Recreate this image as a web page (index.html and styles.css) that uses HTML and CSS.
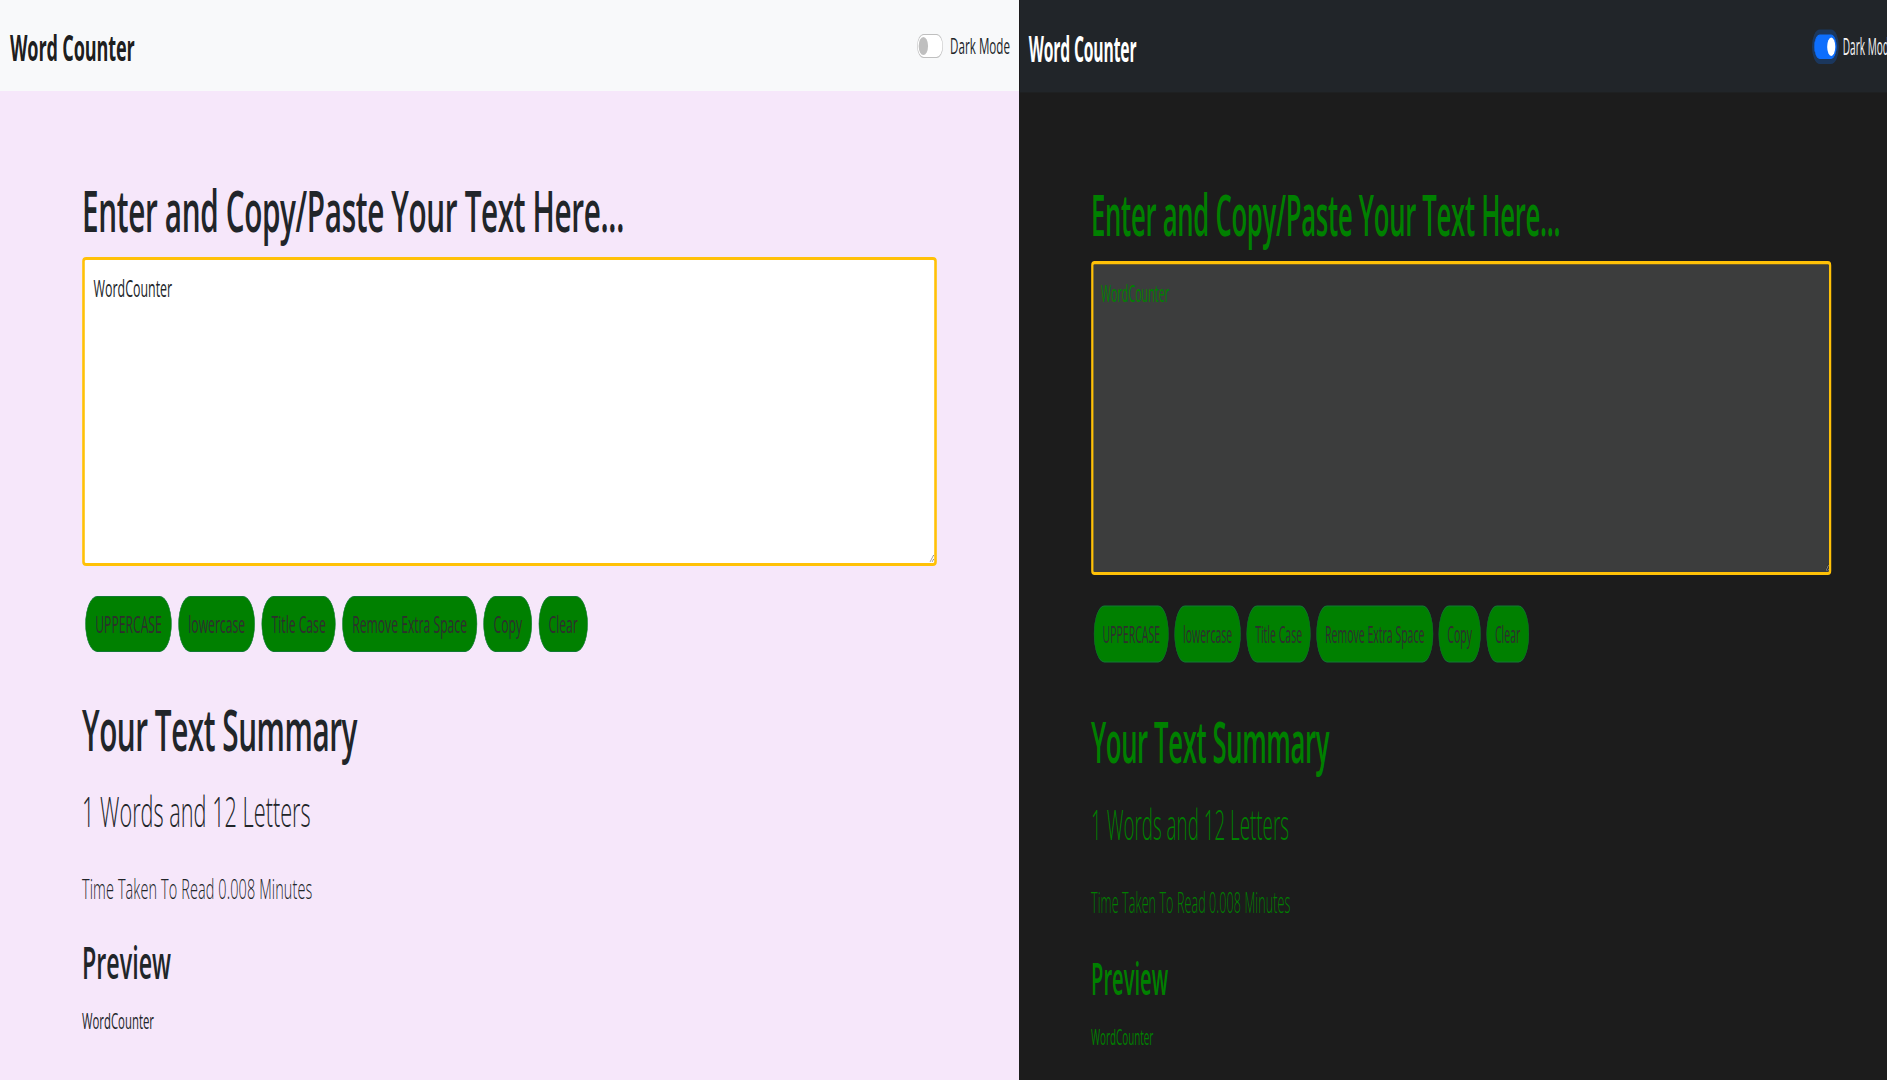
FILE: index.html
```html
<!DOCTYPE html>
<html lang="en">
<head>
<meta charset="utf-8">
<title>Word Counter</title>
<link rel="stylesheet" href="styles.css">
</head>
<body>
<div class="shots">
  <div class="shot shot-light">
    <div class="page theme-light">
      <nav class="navbar">
        <span class="brand">Word Counter</span>
        <label class="switch-wrap"><span class="switch"><span class="knob"></span></span><span class="switch-label">Dark Mode</span></label>
      </nav>
      <main class="container">
        <h1 class="heading">Enter and Copy/Paste Your Text Here...</h1>
        <textarea class="text-box" rows="8">WordCounter</textarea>
        <div class="actions">
          <button class="btn">UPPERCASE</button>
          <button class="btn">lowercase</button>
          <button class="btn">Title Case</button>
          <button class="btn">Remove Extra Space</button>
          <button class="btn">Copy</button>
          <button class="btn">Clear</button>
        </div>
        <h1 class="heading summary-title">Your Text Summary</h1>
        <p class="count">1 Words and 12 Letters</p>
        <p class="time">Time Taken To Read 0.008 Minutes</p>
        <h2 class="preview-title">Preview</h2>
        <p class="preview-text">WordCounter</p>
      </main>
    </div>
  </div>
  <div class="shot shot-dark">
    <div class="page theme-dark">
      <nav class="navbar">
        <span class="brand">Word Counter</span>
        <label class="switch-wrap"><span class="switch"><span class="knob"></span></span><span class="switch-label">Dark Mode</span></label>
      </nav>
      <main class="container">
        <h1 class="heading">Enter and Copy/Paste Your Text Here...</h1>
        <textarea class="text-box" rows="8">WordCounter</textarea>
        <div class="actions">
          <button class="btn">UPPERCASE</button>
          <button class="btn">lowercase</button>
          <button class="btn">Title Case</button>
          <button class="btn">Remove Extra Space</button>
          <button class="btn">Copy</button>
          <button class="btn">Clear</button>
        </div>
        <h1 class="heading summary-title">Your Text Summary</h1>
        <p class="count">1 Words and 12 Letters</p>
        <p class="time">Time Taken To Read 0.008 Minutes</p>
        <h2 class="preview-title">Preview</h2>
        <p class="preview-text">WordCounter</p>
      </main>
    </div>
  </div>
</div>
</body>
</html>
```

FILE: styles.css
```css
html, body {
  margin: 0;
  padding: 0;
  background: #1c1c1c;
  overflow: hidden;
}

.shots {
  display: flex;
  width: 1887px;
  height: 1080px;
}

.shot {
  flex-shrink: 0;
  height: 1080px;
  overflow: hidden;
}

.shot-light { width: 1019px; }
.shot-dark { width: 868px; }

/* the page is laid out normally, then squeezed horizontally like the screenshot */
.page {
  --sx: 0.517;
  width: calc(1019px / var(--sx));
  min-height: 1100px;
  transform-origin: 0 0;
  transform: scaleX(var(--sx));
  font-family: "Open Sans", "Noto Sans", sans-serif;
}

.theme-light {
  background: #f6e7fa;
  color: #212529;
}

.theme-dark {
  background: #1c1c1c;
  color: #008000;
  transform: translateX(1px) scale(0.4477, 1.016);
}

/* navbar */
.navbar {
  box-sizing: border-box;
  height: 91px;
  display: flex;
  align-items: center;
  justify-content: space-between;
  padding: 0 calc(9px / var(--sx)) 0 calc(10px / var(--sx));
}

.theme-light .navbar { background: #f8f9fa; }
.theme-dark .navbar { background: #212529; }

.brand {
  font-size: 35px;
  font-weight: 700;
  line-height: 1;
  margin-top: 3px;
  letter-spacing: -0.3px;
}

.theme-light .brand { color: rgba(0, 0, 0, 0.9); }
.theme-dark .brand { color: #fff; }

.switch-wrap {
  display: flex;
  align-items: center;
}

.switch {
  box-sizing: border-box;
  display: flex;
  align-items: center;
  width: calc(26px / var(--sx));
  height: 24px;
  padding: 0 calc(1px / var(--sx));
  border-style: solid;
  border-width: 1px calc(1px / var(--sx));
  border-radius: calc(6.5px / var(--sx)) / 12px;
}

.knob {
  width: calc(9.5px / var(--sx));
  height: 18px;
  border-radius: 50%;
}

.theme-light .switch {
  background: #fff;
  border-color: rgba(0, 0, 0, 0.25);
  justify-content: flex-start;
}
.theme-light .knob { background: #bfbfbf; }

.theme-dark .switch {
  background: #0d6efd;
  border-color: #0d6efd;
  justify-content: flex-end;
  box-shadow: 0 0 0 5px rgba(13, 110, 253, 0.25);
}
.theme-dark .knob { background: #fff; }

.switch-label {
  margin-left: calc(7px / var(--sx));
  font-size: 22.5px;
  line-height: 1;
  margin-top: 1px;
}

.theme-light .switch-label { color: #212529; }
.theme-dark .switch-label { color: #f4f4f4; }

/* main */
.container {
  width: calc(855px / var(--sx));
  margin: 0 auto;
}

.heading {
  margin: 85px 0 12px;
  font-size: 57.5px;
  line-height: 69px;
  font-weight: 600;
  letter-spacing: -0.7px;
}

.text-box {
  display: block;
  box-sizing: border-box;
  width: 100%;
  height: 309px;
  margin: 0;
  padding: 10px calc(9px / var(--sx));
  border-style: solid;
  border-color: #ffc107;
  border-width: 3px calc(3px / var(--sx));
  border-radius: calc(4px / var(--sx)) / 4px;
  font-family: "Open Sans", "Noto Sans", sans-serif;
  font-size: 24px;
  line-height: 36px;
  outline: none;
}

.theme-light .text-box { background: #fff; color: #212529; }
.theme-dark .text-box { background: #3c3d3d; color: #008000; }

.actions {
  display: flex;
  flex-wrap: wrap;
  margin-top: 30px;
}

.btn {
  margin: 0 calc(3.25px / var(--sx));
  padding: 9px calc(9.5px / var(--sx));
  border: 1px solid #107a33;
  border-radius: calc(12px / var(--sx)) / 28px;
  background: #008000;
  color: #2e2e2e;
  font-family: "Open Sans", "Noto Sans", sans-serif;
  font-size: 23.5px;
  line-height: 36px;
}

.summary-title {
  margin: 43px 0 0;
  letter-spacing: -0.9px;
}

.count {
  margin: 22px 0 0;
  font-size: 42px;
  line-height: 50px;
  font-weight: 300;
}

.time {
  margin: 31px 0 0;
  font-size: 28px;
  line-height: 42px;
  font-weight: 300;
  letter-spacing: 0.2px;
}

.preview-title {
  margin: 25.5px 0 0;
  font-size: 45px;
  line-height: 54px;
  font-weight: 600;
}

.preview-text {
  margin: 15.5px 0 0;
  font-size: 22px;
  line-height: 32px;
  font-weight: 400;
}
```
